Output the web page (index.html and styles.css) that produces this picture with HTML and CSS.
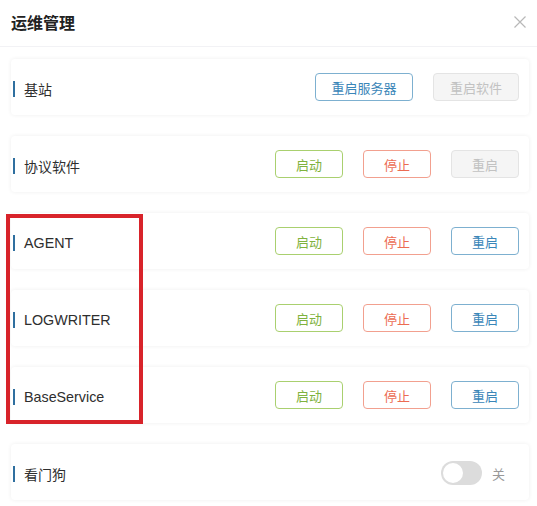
FILE: index.html
```html
<!DOCTYPE html>
<html lang="zh">
<head>
<meta charset="utf-8">
<link rel="stylesheet" href="styles.css">
</head>
<body>
<div class="dialog">
  <div class="header">
    <span class="title">运维管理</span>
    <svg class="close" width="12" height="12" viewBox="0 0 12 12"><path d="M0.5 0.5L11.5 11.5M11.5 0.5L0.5 11.5" stroke="#b8b8b8" stroke-width="1.2" fill="none"/></svg>
  </div>
  <div class="list">
    <div class="card">
      <span class="label">基站</span>
      <div class="actions">
        <button class="btn blue wide">重启服务器</button>
        <button class="btn disabled mid">重启软件</button>
      </div>
    </div>
    <div class="card">
      <span class="label">协议软件</span>
      <div class="actions">
        <button class="btn green">启动</button>
        <button class="btn red">停止</button>
        <button class="btn disabled">重启</button>
      </div>
    </div>
    <div class="card">
      <span class="label latin">AGENT</span>
      <div class="actions">
        <button class="btn green">启动</button>
        <button class="btn red">停止</button>
        <button class="btn blue">重启</button>
      </div>
    </div>
    <div class="card">
      <span class="label latin">LOGWRITER</span>
      <div class="actions">
        <button class="btn green">启动</button>
        <button class="btn red">停止</button>
        <button class="btn blue">重启</button>
      </div>
    </div>
    <div class="card">
      <span class="label latin">BaseService</span>
      <div class="actions">
        <button class="btn green">启动</button>
        <button class="btn red">停止</button>
        <button class="btn blue">重启</button>
      </div>
    </div>
    <div class="card">
      <span class="label">看门狗</span>
      <div class="actions switch-wrap">
        <span class="switch"><span class="knob"></span></span>
        <span class="switch-text">关</span>
      </div>
    </div>
  </div>
  <div class="highlight"></div>
</div>
</body>
</html>
```
FILE: styles.css
```css
* { box-sizing: border-box; }
html, body { margin: 0; padding: 0; background: #fff; }
body {
  font-family: "Noto Sans CJK SC", "Liberation Sans", sans-serif;
  color: #333;
  width: 537px;
  height: 506px;
  overflow: hidden;
}
.dialog { position: relative; }
.header {
  height: 47px;
  display: flex;
  align-items: center;
  justify-content: space-between;
  padding: 0 11px 2px 11px;
  border-bottom: 1px solid #f2f2f5;
}
.title {
  font-size: 16px;
  font-weight: 700;
  color: #222;
}
.list {
  display: flex;
  flex-direction: column;
  gap: 21px;
  padding: 12px 8px 0 11px;
}
.card {
  height: 56px;
  display: flex;
  align-items: center;
  justify-content: space-between;
  padding: 0 10px 0 2px;
  background: #fff;
  border-radius: 4px;
  box-shadow: 0 0 4px rgba(0,0,0,0.07);
}
.label {
  font-size: 14px;
  color: #2e2e2e;
  border-left: 2px solid #2f6f9f;
  padding-left: 9px;
  line-height: 16px;
  height: 16px;
  margin-top: 3px;
  display: flex;
  align-items: center;
}
.label.latin { font-family: "Liberation Sans", "Noto Sans CJK SC", sans-serif; font-size: 14.3px; }
.actions {
  display: flex;
  align-items: center;
  gap: 20px;
}
.btn {
  width: 68px;
  height: 28px;
  border-radius: 4px;
  background: #fff;
  font-family: "Noto Sans CJK SC", sans-serif;
  font-size: 13px;
  padding: 0;
  border: 1px solid;
  cursor: pointer;
}
.btn.wide { width: 98px; }
.btn.mid { width: 86px; }
.btn.blue { border-color: #7db0d0; color: #3a86b8; }
.btn.green { border-color: #a9d06f; color: #7fb23e; }
.btn.red { border-color: #f2a08f; color: #ec6b52; }
.btn.disabled { border-color: #e4e4e4; background: #f5f5f5; color: #c2c2c2; }
.switch-wrap { gap: 10px; margin-right: 14px; margin-top: 2px; }
.switch {
  width: 41px;
  height: 24px;
  border-radius: 12px;
  background: #dcdcdc;
  position: relative;
  display: inline-block;
}
.knob {
  position: absolute;
  left: 2px;
  top: 2px;
  width: 20px;
  height: 20px;
  border-radius: 50%;
  background: #fff;
}
.switch-text { font-size: 13px; color: #999; }
.highlight {
  position: absolute;
  left: 6px;
  top: 214px;
  width: 137px;
  height: 210px;
  border: 4px solid #d8232a;
}
```
